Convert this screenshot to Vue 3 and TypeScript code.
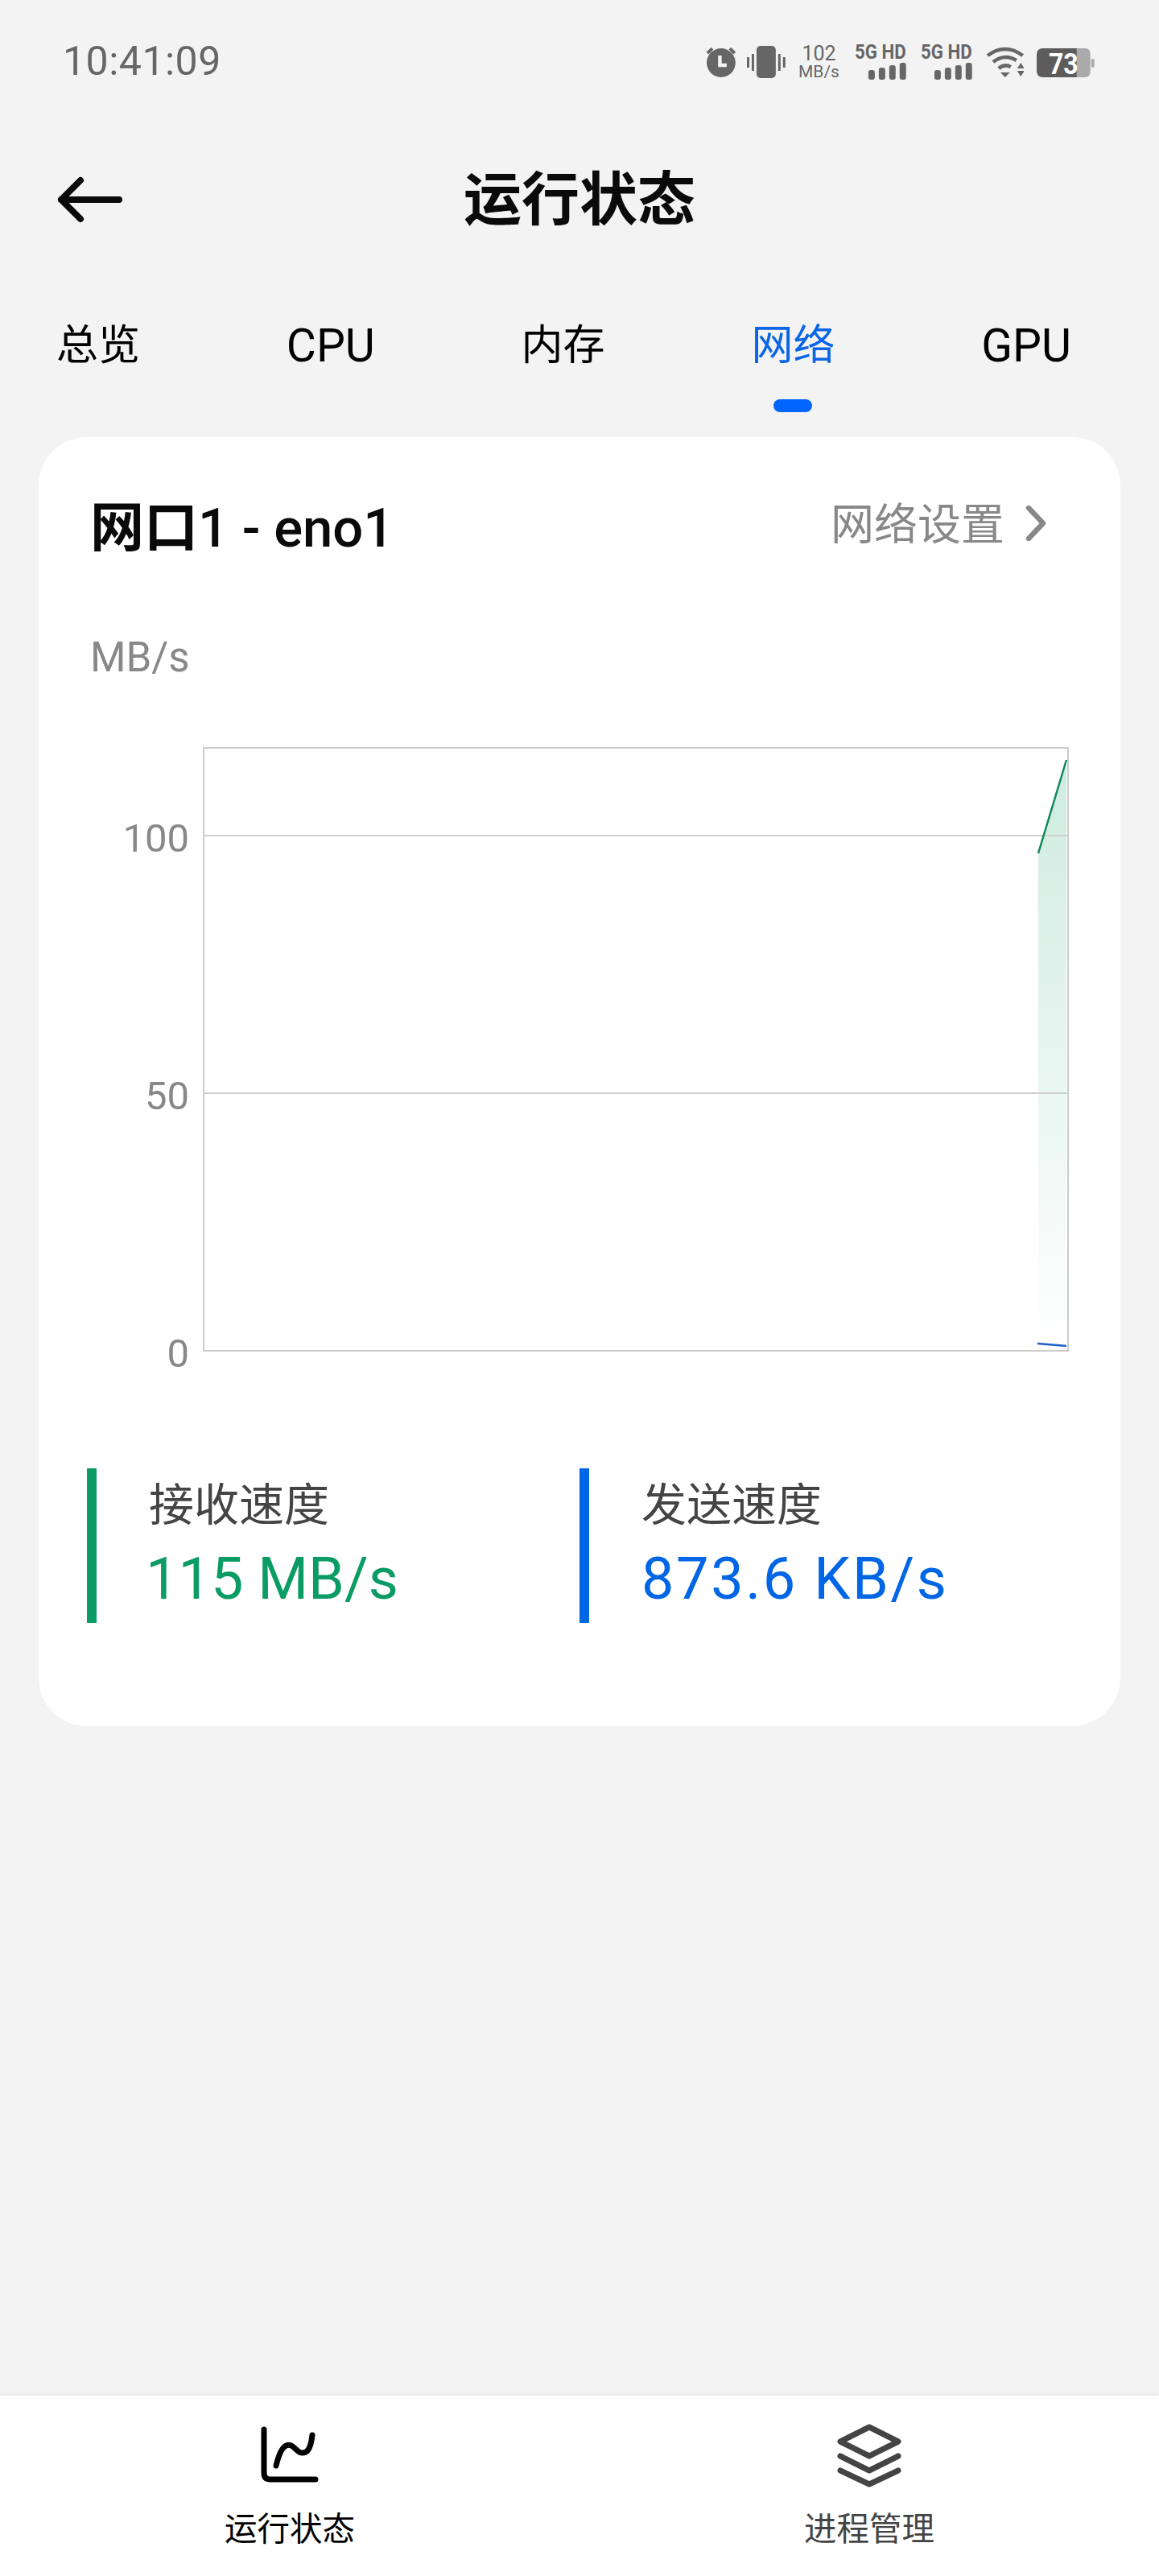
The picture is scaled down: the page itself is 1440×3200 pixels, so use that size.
<script setup lang="ts">
const tabs = [
  { label: "总览" },
  { label: "CPU", latin: true },
  { label: "内存" },
  { label: "网络", active: true },
  { label: "GPU", latin: true }
];

const speeds = [
  { label: "接收速度", value: "115 MB/s", tone: "green" },
  { label: "发送速度", value: "873.6 KB/s", tone: "blue" }
];

// chart coordinates are local to the svg, which spans the card width
const plot = { left: 205, right: 1279, top: 29, bottom: 778 };
const unit = 6.4;
const yOf = (v: number) => plot.bottom - v * unit;
const ticks = [100, 50, 0];
const bars = [0, 1, 2, 3];
</script>

<template>
  <div class="page">
    <div class="status">
      <span class="status__time">10:41:09</span>
      <div class="status__icons">
        <svg width="40" height="38" viewBox="0 0 40 38">
          <circle cx="20" cy="20" r="18" fill="#666" />
          <path d="M3 8 L9 2 M37 8 L31 2" stroke="#666" stroke-width="4" fill="none" />
          <path d="M18.5 11 V23 H27" stroke="#f3f3f3" stroke-width="4.5" fill="none" />
        </svg>
        <svg class="status__vibrate" width="48" height="40" viewBox="0 0 48 40">
          <rect x="12" y="0" width="24" height="40" rx="5" fill="#666" />
          <path d="M1.5 14 V27 M7.5 10 V31 M40.5 10 V31 M46.5 14 V27" stroke="#666" stroke-width="3" />
        </svg>
        <div class="status__speed">
          <span class="status__speed-num">102</span>
          <span class="status__speed-unit">MB/s</span>
        </div>
        <svg v-for="n in 2" :key="n" class="status__signal" width="96" height="60" viewBox="0 -8 96 60">
          <text
            x="0"
            y="18"
            textLength="64"
            lengthAdjust="spacingAndGlyphs"
            font-family="Roboto, sans-serif"
            font-weight="700"
            font-size="25"
            fill="#666"
          >5G HD</text>
          <rect
            v-for="b in bars"
            :key="b"
            :x="17 + b * 13"
            :y="44 - (12 + b * 3)"
            width="8"
            :height="12 + b * 3"
            rx="3"
            fill="#666"
          />
        </svg>
        <svg class="status__wifi" width="48" height="38" viewBox="0 0 48 38">
          <g fill="none" stroke="#666" stroke-width="4.5">
            <path d="M2 11 Q24 -5 46 11" />
            <path d="M9 19 Q23 8 38 17" />
            <path d="M16 27 Q23 21 31 25" />
          </g>
          <path d="M18 32 H30 L24 38 Z M39 27 L43.5 20 L48 27 Z M39 30 H48 L43.5 37 Z" fill="#666" />
        </svg>
        <svg class="status__battery" width="72" height="52" viewBox="0 -8 72 52">
          <path d="M50 0 H60 Q67 0 67 7 V29 Q67 36 60 36 H50 Z" fill="#aaa" />
          <rect x="68" y="13" width="4" height="11" rx="2" fill="#aaa" />
          <path d="M50 0 H8 Q0 0 0 8 V28 Q0 36 8 36 H50 Z" fill="#5c5c5c" />
          <text
            x="15"
            y="32"
            textLength="37"
            lengthAdjust="spacingAndGlyphs"
            font-family="Roboto, sans-serif"
            font-weight="700"
            font-size="37"
            fill="#fff"
          >73</text>
        </svg>
      </div>
    </div>

    <header class="head">
      <svg class="head__back" width="88" height="64" viewBox="0 0 88 64">
        <path d="M81 32 H9 M33 8 L9 32 L33 56" fill="none" stroke="#0a0a0a" stroke-width="8" stroke-linecap="round" stroke-linejoin="round" />
      </svg>
      <h1 class="head__title">运行状态</h1>
    </header>

    <nav class="tabs">
      <div
        v-for="tab in tabs"
        :key="tab.label"
        class="tab"
        :class="{ 'tab--active': tab.active, 'tab--latin': tab.latin }"
      >
        <span class="tab__label">{{ tab.label }}</span>
        <i class="tab__mark"></i>
      </div>
    </nav>

    <main class="main">
      <section class="card">
        <div class="card__head">
          <h2 class="card__title"><b class="card__title-cn">网口</b>1 - eno1</h2>
          <div class="card__link">
            <span class="card__link-text">网络设置</span>
            <svg class="card__chevron" width="28" height="44" viewBox="0 0 28 44">
              <path d="M4 3 L22 22 L4 41" fill="none" stroke="#888" stroke-width="6.5" stroke-linecap="round" stroke-linejoin="round" />
            </svg>
          </div>
        </div>
        <div class="card__unit">MB/s</div>

        <svg class="chart" width="1344" height="820" viewBox="0 0 1344 820">
          <defs>
            <linearGradient id="rx" x1="0" y1="0" x2="0" y2="1">
              <stop offset="0" stop-color="#0a9c64" stop-opacity="0.2" />
              <stop offset="1" stop-color="#0a9c64" stop-opacity="0" />
            </linearGradient>
          </defs>
          <rect
            :x="plot.left"
            :y="plot.top"
            :width="plot.right - plot.left"
            :height="plot.bottom - plot.top"
            fill="#fff"
            stroke="#ccc"
            stroke-width="2"
          />
          <path d="M1242 160 L1277 44 V776 H1242 Z" fill="url(#rx)" />
          <line
            v-for="t in ticks.slice(0, 2)"
            :key="t"
            :x1="plot.left"
            :x2="plot.right"
            :y1="yOf(t)"
            :y2="yOf(t)"
            stroke="#cfcfcf"
            stroke-width="2"
          />
          <text
            v-for="t in ticks"
            :key="'l' + t"
            class="chart__label"
            x="187"
            :y="yOf(t) + 20"
            text-anchor="end"
          >{{ t }}</text>
          <path d="M1242 160 L1277 44" fill="none" stroke="#12885c" stroke-width="2.5" />
          <path d="M1241 769 L1277 772" fill="none" stroke="#1e62c8" stroke-width="2.5" />
        </svg>

        <div class="speeds">
          <div v-for="s in speeds" :key="s.label" class="speed" :class="'speed--' + s.tone">
            <div class="speed__label">{{ s.label }}</div>
            <div class="speed__value">{{ s.value }}</div>
          </div>
        </div>
      </section>
    </main>

    <footer class="bar">
      <div class="bar__item bar__item--active">
        <svg width="80" height="80" viewBox="0 0 80 80">
          <path d="M8 8 V62 Q8 70 16 70 H72" fill="none" stroke="#000" stroke-width="7" stroke-linecap="round" />
          <path d="M23 53 C27 36 33 24 42 28 C49 32 51 40 60 36 C65 33 67 24 68 15" fill="none" stroke="#000" stroke-width="7" stroke-linecap="round" />
        </svg>
        <span class="bar__label">运行状态</span>
      </div>
      <div class="bar__item">
        <svg width="80" height="80" viewBox="0 0 80 80">
          <g fill="none" stroke="#444" stroke-width="7" stroke-linecap="round" stroke-linejoin="round">
            <path d="M40 5 L76 23 L40 41 L4 23 Z" />
            <path d="M4 41 L40 59 L76 41" />
            <path d="M4 59 L40 76 L76 59" />
          </g>
        </svg>
        <span class="bar__label">进程管理</span>
      </div>
    </footer>
  </div>
</template>

<style scoped>
.page {
  width: 1440px;
  height: 3200px;
  display: flex;
  flex-direction: column;
  background-color: #f3f3f3;
  font-family: Roboto, "Noto Sans CJK SC", sans-serif;
  color: #000;
}

.status {
  height: 150px;
  display: flex;
  align-items: center;
  justify-content: space-between;
  padding: 2px 80px 0 78px;
  box-sizing: border-box;
}

.status__time {
  font-size: 50px;
  letter-spacing: 0.5px;
  color: #666;
}

.status__icons {
  display: flex;
  align-items: center;
  width: 484px;
  padding-top: 2px;
}

.status__vibrate {
  margin-left: 12px;
}

.status__speed {
  margin-left: 15px;
  width: 54px;
  display: flex;
  flex-direction: column;
  align-items: center;
  color: #666;
}

.status__speed-num {
  font-size: 25px;
  line-height: 24px;
}

.status__speed-unit {
  font-size: 21px;
  line-height: 20px;
}

.status__signal {
  margin-left: 18px;
  margin-right: -32px;
}

.status__wifi {
  margin-left: 17px;
}

.status__battery {
  margin-left: 16px;
  margin-top: 2px;
}

.head {
  height: 132px;
  margin-top: 32px;
  position: relative;
  display: flex;
  align-items: center;
  justify-content: center;
}

.head__back {
  position: absolute;
  left: 67px;
  top: 34px;
}

.head__title {
  margin: 0;
  padding-top: 1px;
  line-height: 100px;
  font-size: 72px;
  font-weight: 700;
  color: #0a0a0a;
}

.tabs {
  display: flex;
  justify-content: space-between;
  padding: 20px 109px 0 70px;
  margin-top: 64px;
  height: 165px;
  box-sizing: border-box;
}

.tab {
  display: flex;
  flex-direction: column;
  align-items: center;
}

.tab__label {
  font-size: 52px;
  line-height: 64px;
}

.tab--latin .tab__label {
  font-size: 57px;
}

.tab--active .tab__label {
  color: #0a66e6;
}

.tab__mark {
  width: 48px;
  height: 16px;
  margin-top: 34px;
  border-radius: 8px;
}

.tab--active .tab__mark {
  background-color: #0066ff;
}

.main {
  flex: 1;
  padding: 0 48px;
}

.card {
  background-color: #fff;
  border-radius: 60px;
  padding: 69px 66px 128px;
}

.card__head {
  height: 80px;
  display: flex;
  align-items: center;
  justify-content: space-between;
  padding-right: 24px;
}

.card__title {
  margin: 0 0 6px -2px;
  font-size: 67px;
  font-weight: 500;
  color: #0a0a0a;
}

.card__title-cn {
  font-weight: 700;
}

.card__link {
  display: flex;
  align-items: center;
  gap: 26px;
  font-size: 54px;
  color: #888;
}

.card__link-text {
  margin-bottom: 10px;
}

.card__chevron {
  margin-bottom: 4px;
}

.card__unit {
  margin-top: 94px;
  margin-left: -2px;
  padding-top: 2px;
  font-size: 51px;
  line-height: 58px;
  color: #888;
}

.chart {
  display: block;
  margin: 54px -66px -20px;
}

.chart__label {
  font-size: 49px;
  fill: #888;
}

.speeds {
  display: grid;
  grid-template-columns: 612px 1fr;
  margin: 124px 0 0 -6px;
}

.speed {
  height: 192px;
  padding-left: 65px;
  border-left: 12px solid;
  box-sizing: border-box;
}

.speed--green {
  border-color: #0a9c64;
}

.speed--blue {
  border-color: #0066e6;
}

.speed__label {
  margin-top: 11px;
  font-size: 56px;
  line-height: 70px;
  color: #444;
}

.speed__value {
  margin-top: 12px;
  font-size: 72px;
  line-height: 90px;
}

.speed--green .speed__value {
  color: #0a9c64;
  margin-left: -4px;
}

.speed--blue .speed__value {
  color: #0066e6;
  letter-spacing: 2.6px;
}

.bar {
  height: 224px;
  display: grid;
  grid-template-columns: 1fr 1fr;
  background-color: #fff;
  box-shadow: 0 -2px 6px rgba(0, 0, 0, 0.04);
}

.bar__item {
  display: flex;
  flex-direction: column;
  align-items: center;
  padding-top: 34px;
  color: #444;
}

.bar__item--active {
  color: #000;
}

.bar__label {
  margin-top: 24px;
  font-size: 40.5px;
  line-height: 56px;
}
</style>

<style>
html,
body {
  margin: 0;
  background-color: #f3f3f3;
}
</style>
